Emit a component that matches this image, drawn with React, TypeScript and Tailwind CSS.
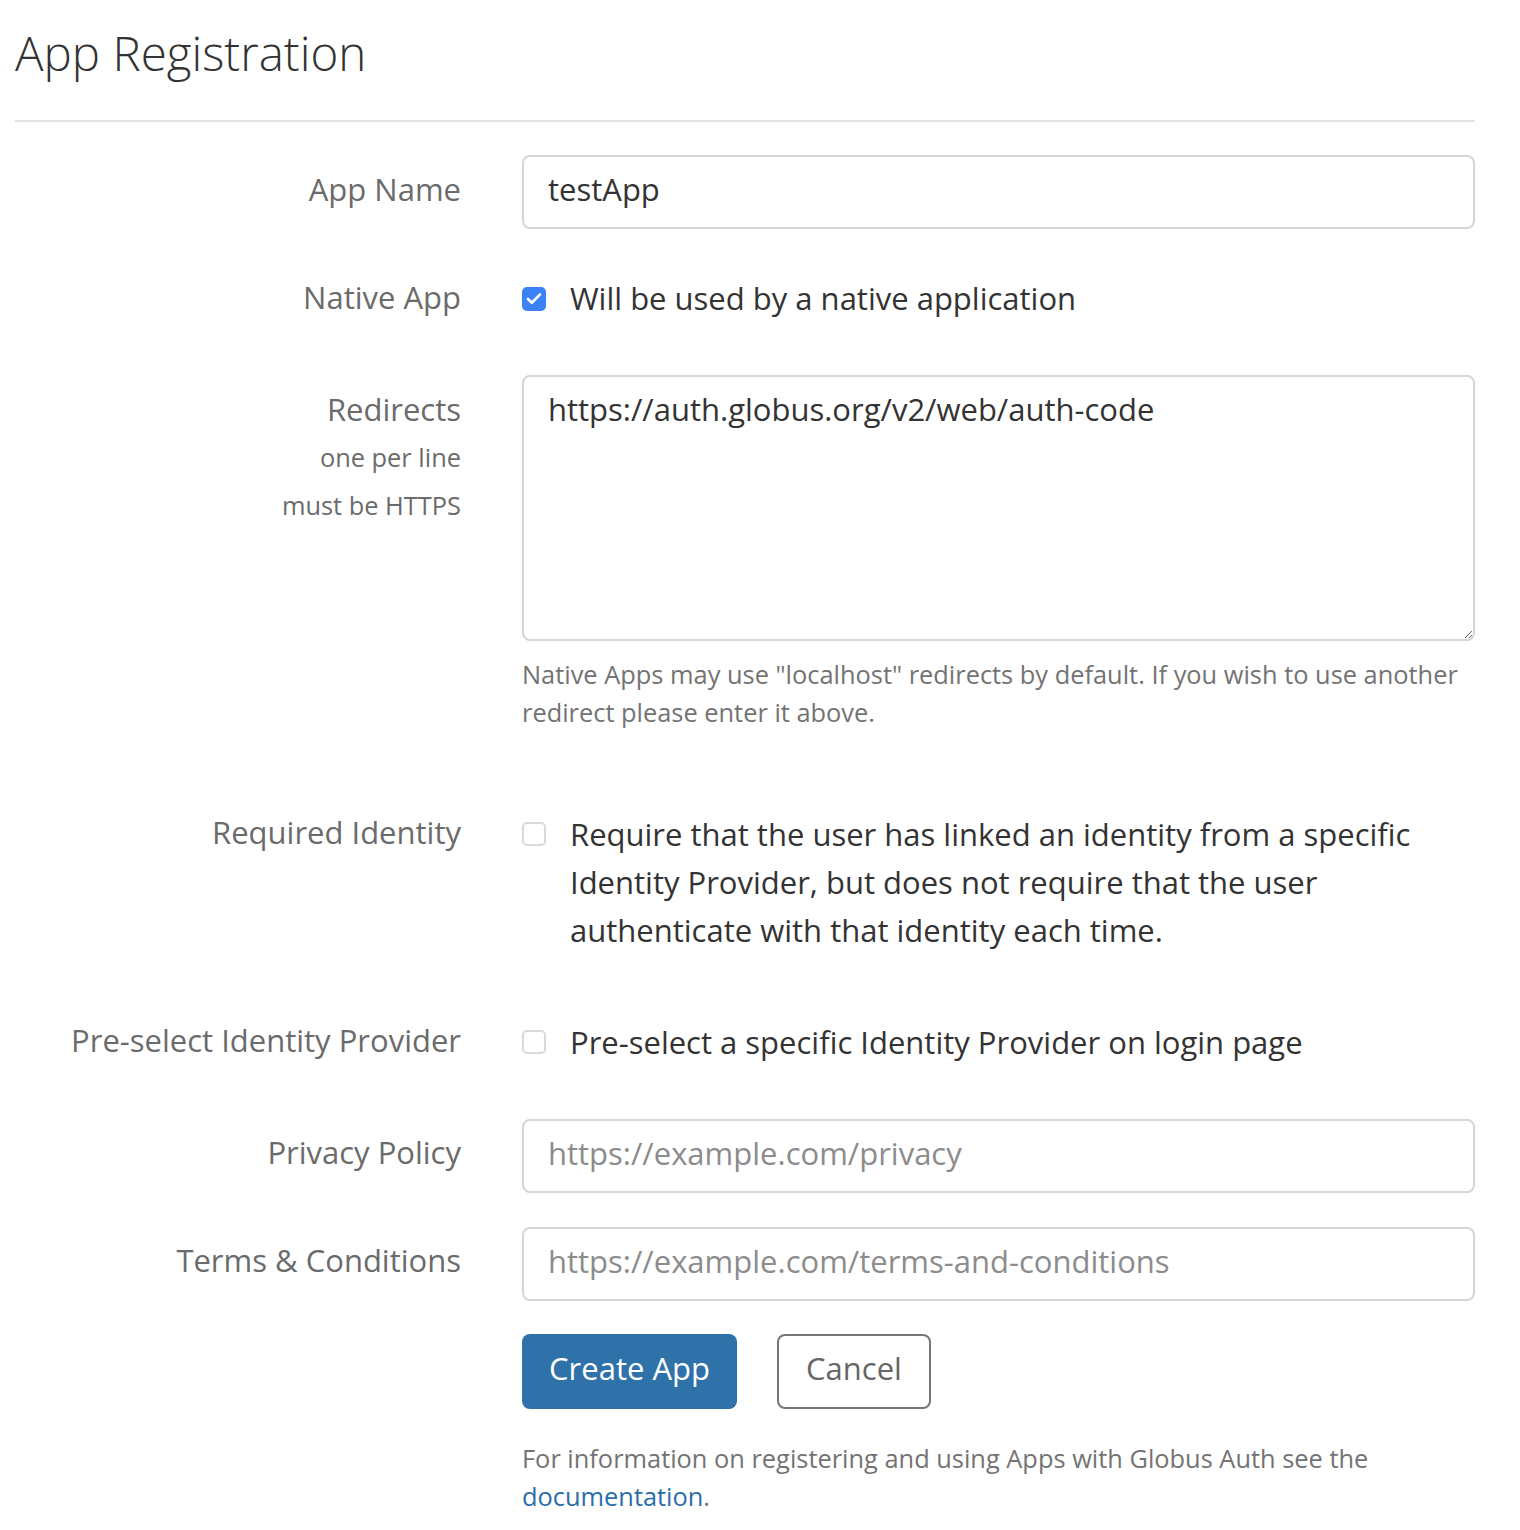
import { Check } from "lucide-react";

const Box = ({ checked }: { checked?: boolean }) =>
  checked ? (
    <span className="mt-[12px] flex h-[24px] w-[24px] shrink-0 items-center justify-center rounded-[5px] bg-[#3b82f6]">
      <Check size={18} strokeWidth={3.5} className="text-white" />
    </span>
  ) : (
    <span className="mt-[12px] h-[24px] w-[24px] shrink-0 rounded-[5px] border-2 border-[#d9d9d9] bg-white" />
  );

export default function App() {
  return (
    <div className="min-h-[1530px] bg-white px-[15px] font-['Open_Sans','Lato',sans-serif] text-[31px] text-[#333]">
      <h1 className="pt-[23px] pb-[37px] text-[47.5px] font-light leading-[60px] text-[#333]">App Registration</h1>
      <div className="w-[1460px] border-t-2 border-[#e3e3e3]" />

      {/* App Name */}
      <div className="mt-[33px] flex gap-[61px]">
        <label className="w-[446px] text-right leading-[68px] text-[#6b6b6b]">App Name</label>
        <input
          readOnly
          defaultValue="testApp"
          className="h-[74px] w-[953px] rounded-[8px] border-2 border-[#d3d6da] px-[24px] pb-[6px] text-[#333] outline-none"
        />
      </div>

      {/* Native App */}
      <div className="mt-[46px] flex h-[48px] gap-[61px]">
        <label className="w-[446px] text-right leading-[44px] text-[#6b6b6b]">Native App</label>
        <div className="flex w-[953px] gap-[24px] leading-[46px]">
          <Box checked />
          <span>Will be used by a native application</span>
        </div>
      </div>

      {/* Redirects */}
      <div className="mt-[52px] flex gap-[61px]">
        <div className="w-[446px] pt-[10px] text-right text-[#6b6b6b]">
          <div className="leading-[48px]">Redirects</div>
          <div className="text-[25.4px] leading-[48px]">one per line</div>
          <div className="text-[25.4px] leading-[48px]">must be HTTPS</div>
        </div>
        <div className="w-[953px]">
          <textarea
            readOnly
            defaultValue="https://auth.globus.org/v2/web/auth-code"
            className="block h-[266px] w-full resize-y rounded-[8px] border-2 border-[#d3d6da] px-[24px] pt-[8px] pb-[6px] leading-[48px] text-[#333] outline-none"
          />
          <p className="mt-[14px] text-[25.4px] leading-[38px] text-[#737373]">
            Native Apps may use "localhost" redirects by default. If you wish to use another redirect please enter it above.
          </p>
        </div>
      </div>

      {/* Required Identity */}
      <div className="mt-[79px] flex gap-[61px]">
        <label className="w-[446px] text-right leading-[44px] text-[#6b6b6b]">Required Identity</label>
        <div className="flex w-[953px] gap-[24px] leading-[48px]">
          <Box />
          <span>
            Require that the user has linked an identity from a specific Identity Provider, but does not require that
            the user authenticate with that identity each time.
          </span>
        </div>
      </div>

      {/* Pre-select */}
      <div className="mt-[64px] flex gap-[61px]">
        <label className="w-[446px] text-right leading-[44px] text-[#6b6b6b]">Pre-select Identity Provider</label>
        <div className="flex w-[953px] gap-[24px] leading-[48px]">
          <Box />
          <span>Pre-select a specific Identity Provider on login page</span>
        </div>
      </div>

      {/* Privacy Policy */}
      <div className="mt-[53px] flex gap-[61px]">
        <label className="w-[446px] text-right leading-[66px] text-[#6b6b6b]">Privacy Policy</label>
        <input
          readOnly
          placeholder="https://example.com/privacy"
          className="h-[74px] w-[953px] rounded-[8px] border-2 border-[#d3d6da] px-[24px] pb-[6px] text-[#333] outline-none placeholder:text-[#8c8c8c]"
        />
      </div>

      {/* Terms */}
      <div className="mt-[34px] flex gap-[61px]">
        <label className="w-[446px] text-right leading-[66px] text-[#6b6b6b]">Terms &amp; Conditions</label>
        <input
          readOnly
          placeholder="https://example.com/terms-and-conditions"
          className="h-[74px] w-[953px] rounded-[8px] border-2 border-[#d3d6da] px-[24px] pb-[6px] text-[#333] outline-none placeholder:text-[#8c8c8c]"
        />
      </div>

      {/* Buttons */}
      <div className="mt-[33px] flex gap-[61px]">
        <div className="w-[446px]" />
        <div className="w-[953px]">
          <div className="flex gap-[40px]">
            <button className="h-[75px] w-[215px] rounded-[8px] bg-[#2f72a9] pb-[6px] text-white">Create App</button>
            <button className="h-[75px] w-[154px] rounded-[8px] border-2 border-[#767676] bg-white pb-[6px] text-[#666]">
              Cancel
            </button>
          </div>
          <p className="mt-[30px] text-[25.4px] leading-[38px] text-[#737373]">
            For information on registering and using Apps with Globus Auth see the{" "}
            <a className="text-[#2a6ea8]">documentation</a>.
          </p>
        </div>
      </div>
    </div>
  );
}
